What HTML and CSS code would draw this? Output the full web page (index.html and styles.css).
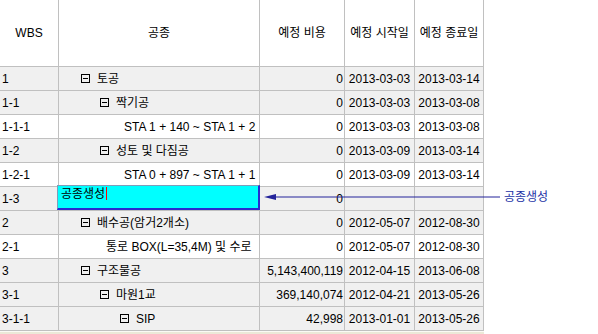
FILE: index.html
```html
<!DOCTYPE html>
<html lang="ko">
<head>
<meta charset="utf-8">
<title>WBS</title>
<link rel="stylesheet" href="styles.css">
</head>
<body>
<div class="page">
  <div class="grid">
    <div class="row head">
      <div class="c ctr">WBS</div>
      <div class="c ctr">공종</div>
      <div class="c ctr">예정 비용</div>
      <div class="c ctr">예정 시작일</div>
      <div class="c ctr">예정 종료일</div>
    </div>
    <div class="row alt">
      <div class="c wbs">1</div>
      <div class="c name l1"><span class="box"></span><span>토공</span></div>
      <div class="c num">0</div>
      <div class="c ctr">2013-03-03</div>
      <div class="c ctr">2013-03-14</div>
    </div>
    <div class="row alt">
      <div class="c wbs">1-1</div>
      <div class="c name l2"><span class="box"></span><span>짝기공</span></div>
      <div class="c num">0</div>
      <div class="c ctr">2013-03-03</div>
      <div class="c ctr">2013-03-08</div>
    </div>
    <div class="row">
      <div class="c wbs">1-1-1</div>
      <div class="c name leaf3"><span>STA 1 + 140 ~ STA 1 + 2</span></div>
      <div class="c num">0</div>
      <div class="c ctr">2013-03-03</div>
      <div class="c ctr">2013-03-08</div>
    </div>
    <div class="row alt">
      <div class="c wbs">1-2</div>
      <div class="c name l2"><span class="box"></span><span>성토 및 다짐공</span></div>
      <div class="c num">0</div>
      <div class="c ctr">2013-03-09</div>
      <div class="c ctr">2013-03-14</div>
    </div>
    <div class="row">
      <div class="c wbs">1-2-1</div>
      <div class="c name leaf3"><span>STA 0 + 897 ~ STA 1 + 1</span></div>
      <div class="c num">0</div>
      <div class="c ctr">2013-03-09</div>
      <div class="c ctr">2013-03-14</div>
    </div>
    <div class="row alt">
      <div class="c wbs">1-3</div>
      <div class="c name edit-host"><div class="editor">공종생성<span class="caret"></span></div></div>
      <div class="c num">0</div>
      <div class="c ctr"></div>
      <div class="c ctr"></div>
    </div>
    <div class="row alt">
      <div class="c wbs">2</div>
      <div class="c name l1"><span class="box"></span><span>배수공(암거2개소)</span></div>
      <div class="c num">0</div>
      <div class="c ctr">2012-05-07</div>
      <div class="c ctr">2012-08-30</div>
    </div>
    <div class="row">
      <div class="c wbs">2-1</div>
      <div class="c name leaf2"><span>통로 BOX(L=35,4M) 및 수로</span></div>
      <div class="c num">0</div>
      <div class="c ctr">2012-05-07</div>
      <div class="c ctr">2012-08-30</div>
    </div>
    <div class="row alt">
      <div class="c wbs">3</div>
      <div class="c name l1"><span class="box"></span><span>구조물공</span></div>
      <div class="c num">5,143,400,119</div>
      <div class="c ctr">2012-04-15</div>
      <div class="c ctr">2013-06-08</div>
    </div>
    <div class="row alt">
      <div class="c wbs">3-1</div>
      <div class="c name l2"><span class="box"></span><span>마원1교</span></div>
      <div class="c num">369,140,074</div>
      <div class="c ctr">2012-04-21</div>
      <div class="c ctr">2013-05-26</div>
    </div>
    <div class="row alt">
      <div class="c wbs">3-1-1</div>
      <div class="c name l3"><span class="box"></span><span>SIP</span></div>
      <div class="c num">42,998</div>
      <div class="c ctr">2013-01-01</div>
      <div class="c ctr">2013-05-26</div>
    </div>
    <div class="scroll"></div>
  </div>

  <div class="callout">
    <svg class="arrow" width="238" height="10" viewBox="0 0 238 10">
      <line x1="8" y1="5" x2="236" y2="5" stroke="#23239a" stroke-width="1"/>
      <polygon points="0,5 12,2 12,8" fill="#23239a"/>
    </svg>
    <span class="callout-label">공종생성</span>
  </div>
</div>
</body>
</html>
```

FILE: styles.css
```css
html, body {
  margin: 0;
  padding: 0;
  background: #ffffff;
}

.page {
  position: relative;
  width: 598px;
  height: 334px;
  overflow: hidden;
  font-family: "Liberation Sans", "Noto Sans CJK KR", sans-serif;
  font-size: 12px;
  color: #000;
}

.grid {
  width: 484px;
  display: flex;
  flex-direction: column;
}

.row {
  display: grid;
  grid-template-columns: 59px 201px 85px 70px 69px;
  height: 24px;
  background: #ffffff;
}

.row.head {
  height: 67px;
}

.row.alt {
  background: #f0f0f0;
}

.c {
  box-sizing: border-box;
  border-right: 1px solid #c0c0c0;
  border-bottom: 1px solid #c0c0c0;
  display: flex;
  align-items: center;
  white-space: nowrap;
  overflow: hidden;
  line-height: 14px;
}

.ctr {
  justify-content: center;
}

.wbs {
  padding-left: 2px;
}

.num {
  justify-content: flex-end;
  padding-right: 1px;
}

.name {
  gap: 7px;
}

.l1 { padding-left: 22px; }
.l2 { padding-left: 41px; }
.l3 { padding-left: 61px; }
.leaf2 { padding-left: 47px; }
.leaf3 { padding-left: 65px; }

.box {
  flex: none;
  box-sizing: border-box;
  width: 9px;
  height: 9px;
  border: 1px solid #000;
  display: flex;
  align-items: center;
  justify-content: center;
}

.box::before {
  content: "";
  width: 5px;
  height: 1px;
  background: #000;
}

.edit-host {
  position: relative;
  overflow: visible;
}

.editor {
  position: absolute;
  left: -2px;
  top: -2px;
  width: 203px;
  height: 25px;
  box-sizing: border-box;
  background: #00ffff;
  border-left: 1px solid #7f9db9;
  border-top: 1px solid #7f9db9;
  border-right: 2px solid #2a2ad0;
  border-bottom: 2px solid #2a2ad0;
  padding: 1px 0 0 3px;
  line-height: 14px;
  font-size: 12px;
  display: flex;
  align-items: flex-start;
}

.caret {
  display: inline-block;
  width: 1px;
  height: 13px;
  margin-left: 1px;
  background: #ff0000;
}

.scroll {
  height: 4px;
  border-top: 1px solid #fbfaf5;
  background: #ece9d8;
}

.callout {
  position: absolute;
  left: 264px;
  top: 191px;
  display: flex;
  align-items: center;
  gap: 2px;
  height: 12px;
}

.arrow {
  display: block;
}

.callout-label {
  color: #2232a6;
  font-size: 12px;
  line-height: 12px;
}
```
